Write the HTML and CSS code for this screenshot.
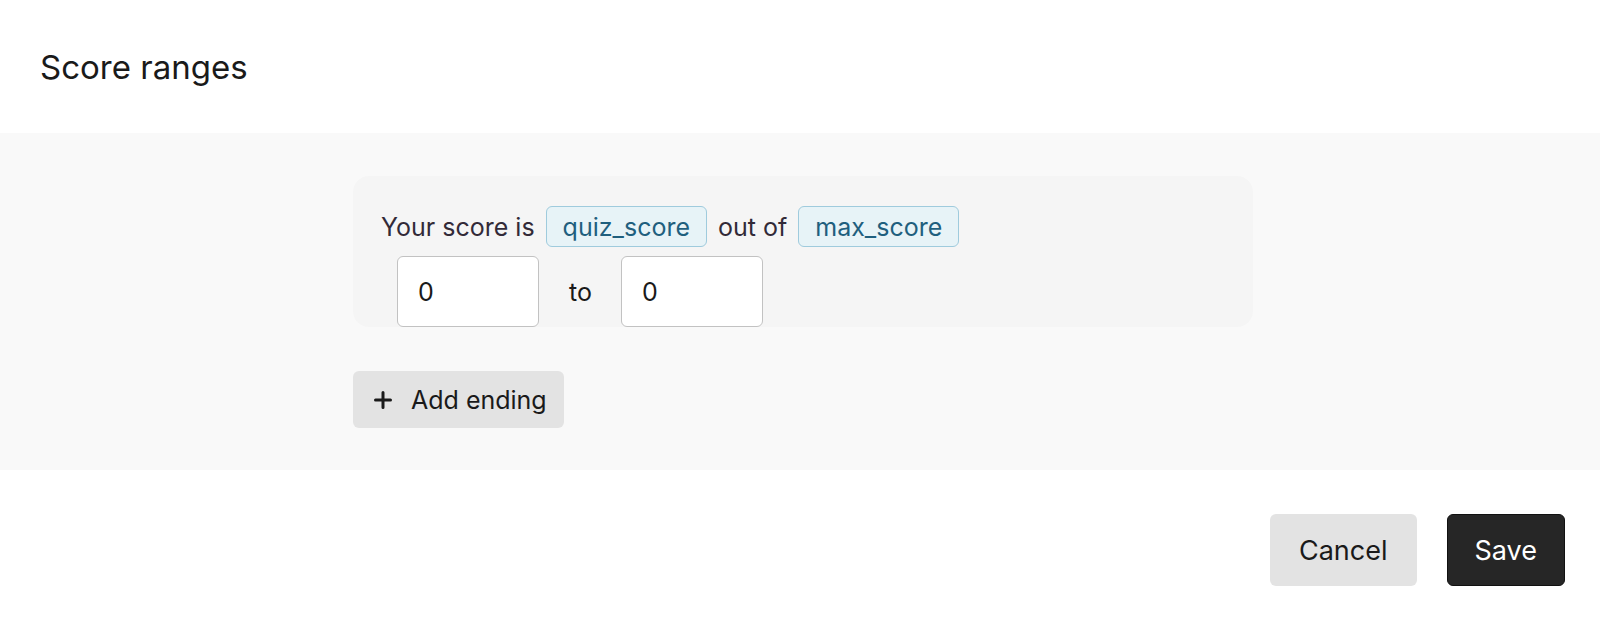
FILE: index.html
```html
<!DOCTYPE html>
<html lang="en">
<head>
<meta charset="UTF-8">
<meta name="viewport" content="width=device-width, initial-scale=1.0">
<title>Score ranges</title>
<link rel="stylesheet" href="styles.css">
</head>
<body>
<div class="dialog">
    <div class="dialog-header">
        <h1 class="dialog-title">Score ranges</h1>
    </div>

    <div class="dialog-body">
        <div class="ranges">
            <div class="range-card">
                <div class="range-text">
                    <span>Your score is</span>
                    <span class="var-chip">quiz_score</span>
                    <span>out of</span>
                    <span class="var-chip">max_score</span>
                </div>
                <div class="range-inputs">
                    <input class="range-input" type="text" value="0">
                    <span class="range-to">to</span>
                    <input class="range-input" type="text" value="0">
                </div>
            </div>

            <button class="add-btn">
                <svg width="18" height="18" viewBox="0 0 18 18">
                    <path d="M9 1.5v15M1.5 9h15" stroke="#1a1a1a" stroke-width="3" stroke-linecap="round"/>
                </svg>
                <span>Add ending</span>
            </button>
        </div>
    </div>

    <div class="dialog-footer">
        <button class="btn btn-cancel">Cancel</button>
        <button class="btn btn-save">Save</button>
    </div>
</div>
</body>
</html>
```

FILE: styles.css
```css
body, html {
    margin: 0;
    padding: 0;
    height: 100%;
    overflow: hidden;
    background: #fff;
}

body {
    font-family: 'Inter', 'Noto Sans', sans-serif;
    color: #1a1a1a;
}

.dialog-header {
    height: 133px;
    display: flex;
    align-items: center;
    padding-left: 40px;
}

.dialog-title {
    margin: 0;
    font-size: 33px;
    font-weight: 400;
    color: #1a1a1a;
}

.dialog-body {
    background: #f9f9f9;
    padding: 43px 0 42px 6px;
}

.ranges {
    width: 900px;
    margin: 0 auto;
    display: flex;
    flex-direction: column;
    align-items: flex-start;
    gap: 44px;
}

.range-card {
    align-self: stretch;
    background: #f5f5f5;
    border-radius: 16px;
    padding: 30px 30px 0 28px;
    display: flex;
    flex-direction: column;
    gap: 9px;
}

.range-text {
    display: flex;
    align-items: center;
    gap: 11px;
    font-size: 25px;
    color: #322a38;
}

.var-chip {
    height: 39px;
    display: flex;
    align-items: center;
    padding: 0 16px;
    background: #e7f3f7;
    border: 1px solid #9fcbdd;
    border-radius: 6px;
    color: #1f5f7e;
}

.range-inputs {
    display: flex;
    align-items: center;
    margin-left: 16px;
}

.range-input {
    box-sizing: border-box;
    width: 142px;
    height: 71px;
    padding: 0 0 0 20px;
    border: 1px solid #c2c2c2;
    border-radius: 6px;
    background: #fff;
    font-family: 'Inter', 'Noto Sans', sans-serif;
    font-size: 25px;
    color: #1a1a1a;
    outline: none;
}

.range-to {
    font-size: 25px;
    color: #1a1a1a;
    margin: 0 29px 0 30px;
}

.add-btn {
    display: flex;
    align-items: center;
    gap: 19px;
    height: 57px;
    padding: 0 17px 0 21px;
    border: none;
    border-radius: 6px;
    background: #e3e3e3;
    font-family: 'Inter', 'Noto Sans', sans-serif;
    font-size: 25px;
    color: #1a1a1a;
    cursor: pointer;
}

.dialog-footer {
    display: flex;
    justify-content: flex-end;
    gap: 30px;
    padding: 44px 35px 0 0;
}

.btn {
    box-sizing: border-box;
    height: 72px;
    padding: 0 29px;
    border-radius: 6px;
    font-family: 'Inter', 'Noto Sans', sans-serif;
    font-size: 27px;
    cursor: pointer;
}

.btn-cancel {
    background: #e3e3e3;
    border: none;
    color: #1a1a1a;
}

.btn-save {
    padding: 0 27px;
    background: #262626;
    border: 1px solid #111;
    color: #fff;
}
```
